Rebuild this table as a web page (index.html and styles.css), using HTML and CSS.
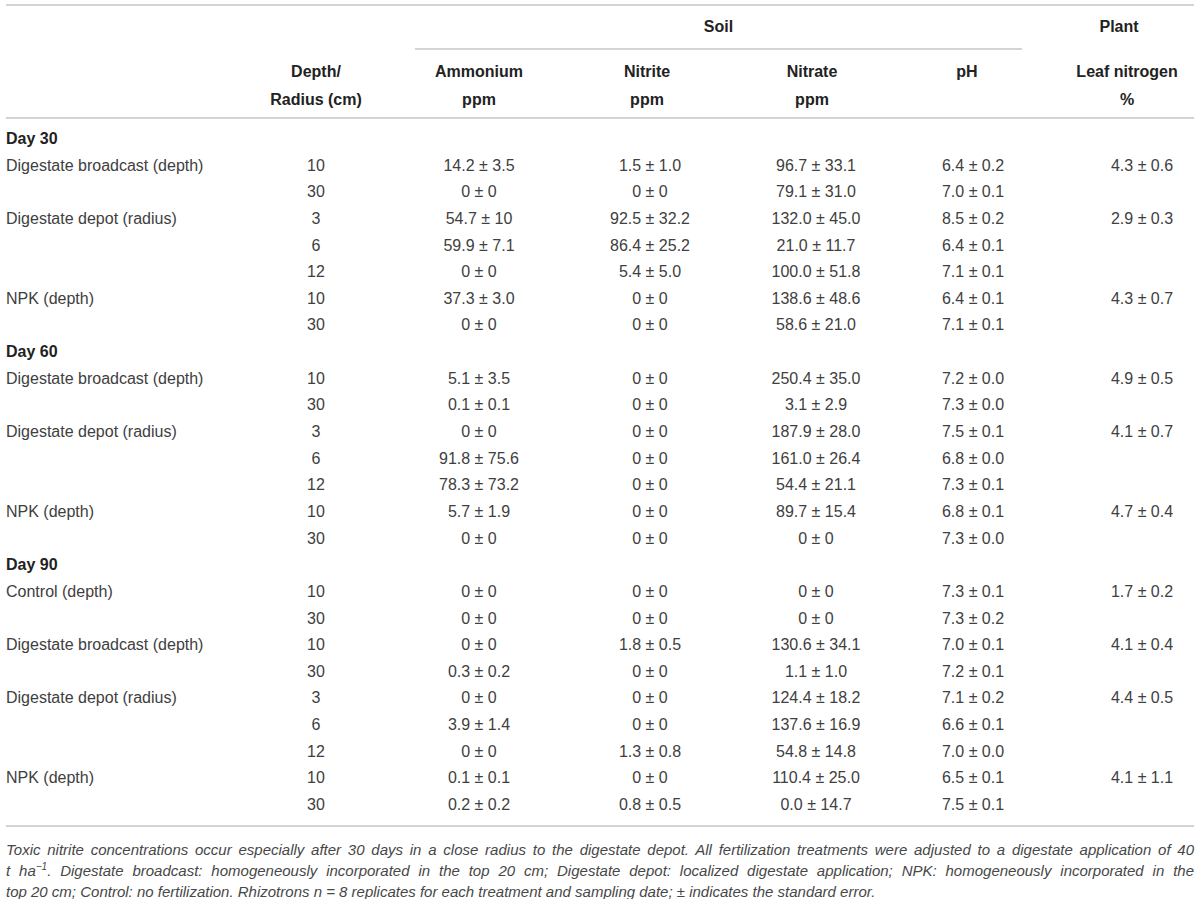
FILE: index.html
```html
<!DOCTYPE html>
<html lang="en">
<head>
  <meta charset="UTF-8">
  <meta name="viewport" content="width=device-width, initial-scale=1.0">
  <title>Soil and plant nitrogen</title>
  <link rel="stylesheet" href="styles.css">
</head>
<body>
<div class="page">
  <table class="data-table">
    <colgroup>
      <col class="col-label">
      <col class="col-depth">
      <col class="col-ammonium">
      <col class="col-nitrite">
      <col class="col-nitrate">
      <col class="col-ph">
      <col class="col-leaf">
    </colgroup>
    <thead>
      <tr class="group-row">
        <th rowspan="2" class="head-label"></th>
        <th rowspan="2" class="head-depth">Depth/<br>Radius (cm)</th>
        <th colspan="4" class="group"><div class="group-title">Soil</div></th>
        <th class="group plant">Plant</th>
      </tr>
      <tr class="unit-row">
        <th>Ammonium<br>ppm</th>
        <th>Nitrite<br>ppm</th>
        <th>Nitrate<br>ppm</th>
        <th class="ph">pH<br>&nbsp;</th>
        <th class="leaf">Leaf nitrogen<br>%</th>
      </tr>
    </thead>
    <tbody>
      <tr class="day first"><td colspan="7">Day 30</td></tr>
      <tr><td>Digestate broadcast (depth)</td><td>10</td><td>14.2 ± 3.5</td><td class="nitrite">1.5 ± 1.0</td><td class="nitrate">96.7 ± 33.1</td><td class="ph">6.4 ± 0.2</td><td class="leaf">4.3 ± 0.6</td></tr>
      <tr><td></td><td>30</td><td>0 ± 0</td><td class="nitrite">0 ± 0</td><td class="nitrate">79.1 ± 31.0</td><td class="ph">7.0 ± 0.1</td><td class="leaf"></td></tr>
      <tr><td>Digestate depot (radius)</td><td>3</td><td>54.7 ± 10</td><td class="nitrite">92.5 ± 32.2</td><td class="nitrate">132.0 ± 45.0</td><td class="ph">8.5 ± 0.2</td><td class="leaf">2.9 ± 0.3</td></tr>
      <tr><td></td><td>6</td><td>59.9 ± 7.1</td><td class="nitrite">86.4 ± 25.2</td><td class="nitrate">21.0 ± 11.7</td><td class="ph">6.4 ± 0.1</td><td class="leaf"></td></tr>
      <tr><td></td><td>12</td><td>0 ± 0</td><td class="nitrite">5.4 ± 5.0</td><td class="nitrate">100.0 ± 51.8</td><td class="ph">7.1 ± 0.1</td><td class="leaf"></td></tr>
      <tr><td>NPK (depth)</td><td>10</td><td>37.3 ± 3.0</td><td class="nitrite">0 ± 0</td><td class="nitrate">138.6 ± 48.6</td><td class="ph">6.4 ± 0.1</td><td class="leaf">4.3 ± 0.7</td></tr>
      <tr><td></td><td>30</td><td>0 ± 0</td><td class="nitrite">0 ± 0</td><td class="nitrate">58.6 ± 21.0</td><td class="ph">7.1 ± 0.1</td><td class="leaf"></td></tr>

      <tr class="day"><td colspan="7">Day 60</td></tr>
      <tr><td>Digestate broadcast (depth)</td><td>10</td><td>5.1 ± 3.5</td><td class="nitrite">0 ± 0</td><td class="nitrate">250.4 ± 35.0</td><td class="ph">7.2 ± 0.0</td><td class="leaf">4.9 ± 0.5</td></tr>
      <tr><td></td><td>30</td><td>0.1 ± 0.1</td><td class="nitrite">0 ± 0</td><td class="nitrate">3.1 ± 2.9</td><td class="ph">7.3 ± 0.0</td><td class="leaf"></td></tr>
      <tr><td>Digestate depot (radius)</td><td>3</td><td>0 ± 0</td><td class="nitrite">0 ± 0</td><td class="nitrate">187.9 ± 28.0</td><td class="ph">7.5 ± 0.1</td><td class="leaf">4.1 ± 0.7</td></tr>
      <tr><td></td><td>6</td><td>91.8 ± 75.6</td><td class="nitrite">0 ± 0</td><td class="nitrate">161.0 ± 26.4</td><td class="ph">6.8 ± 0.0</td><td class="leaf"></td></tr>
      <tr><td></td><td>12</td><td>78.3 ± 73.2</td><td class="nitrite">0 ± 0</td><td class="nitrate">54.4 ± 21.1</td><td class="ph">7.3 ± 0.1</td><td class="leaf"></td></tr>
      <tr><td>NPK (depth)</td><td>10</td><td>5.7 ± 1.9</td><td class="nitrite">0 ± 0</td><td class="nitrate">89.7 ± 15.4</td><td class="ph">6.8 ± 0.1</td><td class="leaf">4.7 ± 0.4</td></tr>
      <tr><td></td><td>30</td><td>0 ± 0</td><td class="nitrite">0 ± 0</td><td class="nitrate">0 ± 0</td><td class="ph">7.3 ± 0.0</td><td class="leaf"></td></tr>

      <tr class="day"><td colspan="7">Day 90</td></tr>
      <tr><td>Control (depth)</td><td>10</td><td>0 ± 0</td><td class="nitrite">0 ± 0</td><td class="nitrate">0 ± 0</td><td class="ph">7.3 ± 0.1</td><td class="leaf">1.7 ± 0.2</td></tr>
      <tr><td></td><td>30</td><td>0 ± 0</td><td class="nitrite">0 ± 0</td><td class="nitrate">0 ± 0</td><td class="ph">7.3 ± 0.2</td><td class="leaf"></td></tr>
      <tr><td>Digestate broadcast (depth)</td><td>10</td><td>0 ± 0</td><td class="nitrite">1.8 ± 0.5</td><td class="nitrate">130.6 ± 34.1</td><td class="ph">7.0 ± 0.1</td><td class="leaf">4.1 ± 0.4</td></tr>
      <tr><td></td><td>30</td><td>0.3 ± 0.2</td><td class="nitrite">0 ± 0</td><td class="nitrate">1.1 ± 1.0</td><td class="ph">7.2 ± 0.1</td><td class="leaf"></td></tr>
      <tr><td>Digestate depot (radius)</td><td>3</td><td>0 ± 0</td><td class="nitrite">0 ± 0</td><td class="nitrate">124.4 ± 18.2</td><td class="ph">7.1 ± 0.2</td><td class="leaf">4.4 ± 0.5</td></tr>
      <tr><td></td><td>6</td><td>3.9 ± 1.4</td><td class="nitrite">0 ± 0</td><td class="nitrate">137.6 ± 16.9</td><td class="ph">6.6 ± 0.1</td><td class="leaf"></td></tr>
      <tr><td></td><td>12</td><td>0 ± 0</td><td class="nitrite">1.3 ± 0.8</td><td class="nitrate">54.8 ± 14.8</td><td class="ph">7.0 ± 0.0</td><td class="leaf"></td></tr>
      <tr><td>NPK (depth)</td><td>10</td><td>0.1 ± 0.1</td><td class="nitrite">0 ± 0</td><td class="nitrate">110.4 ± 25.0</td><td class="ph">6.5 ± 0.1</td><td class="leaf">4.1 ± 1.1</td></tr>
      <tr class="last"><td></td><td>30</td><td>0.2 ± 0.2</td><td class="nitrite">0.8 ± 0.5</td><td class="nitrate">0.0 ± 14.7</td><td class="ph">7.5 ± 0.1</td><td class="leaf"></td></tr>
    </tbody>
  </table>

  <p class="table-note">
    <span class="note-line">Toxic nitrite concentrations occur especially after 30 days in a close radius to the digestate depot. All fertilization treatments were adjusted to a digestate application of 40</span>
    <span class="note-line">t ha<sup>−1</sup>. Digestate broadcast: homogeneously incorporated in the top 20 cm; Digestate depot: localized digestate application; NPK: homogeneously incorporated in the</span>
    <span class="note-line end">top 20 cm; Control: no fertilization. Rhizotrons n = 8 replicates for each treatment and sampling date; ± indicates the standard error.</span>
  </p>
</div>
</body>
</html>
```

FILE: styles.css
```css
/* Base */
* {
  margin: 0;
  padding: 0;
  box-sizing: border-box;
}

body {
  font-family: "Liberation Sans", Arial, Helvetica, sans-serif;
  background: #ffffff;
  color: #404040;
}

.page {
  width: 1200px;
  padding: 4px 6px 0 6px;
}

/* Table */
.data-table {
  width: 1188px;
  table-layout: fixed;
  border-collapse: separate;
  border-spacing: 0;
  border-top: 2px solid #d4d4d4;
  border-bottom: 2px solid #d4d4d4;
}

.col-label { width: 234px; }
.col-depth { width: 152px; }
.col-ammonium { width: 174px; }
.col-nitrite { width: 162px; }
.col-nitrate { width: 168px; }
.col-ph { width: 148px; }
.col-leaf { width: 150px; }

/* Header */
.data-table th {
  font-size: 16px;
  font-weight: bold;
  color: #222;
  text-align: center;
  padding: 0;
}

.group-row th.group {
  vertical-align: top;
  line-height: 42px;
}

.group-title {
  margin: 0 22px 0 23px;
  border-bottom: 2px solid #d4d4d4;
}

.head-label,
.head-depth {
  vertical-align: bottom;
  line-height: 28px;
  padding-bottom: 3px !important;
  border-bottom: 2px solid #d4d4d4;
}

.unit-row th {
  line-height: 28px;
  padding: 8px 0 3px;
  border-bottom: 2px solid #d4d4d4;
}

.unit-row th.ph { padding-right: 6px; }
.unit-row th.leaf { padding-left: 16px; }

/* Body rows */
.data-table td {
  font-size: 16px;
  line-height: 26.64px;
  text-align: center;
  white-space: nowrap;
  padding: 0;
}

.data-table td:first-child {
  text-align: left;
}

.data-table td.nitrite { padding-left: 6px; }
.data-table td.nitrate { padding-left: 8px; }
.data-table td.ph { padding-left: 6px; }
.data-table td.leaf { padding-left: 46px; }

.day td {
  font-weight: bold;
  color: #222;
}

.first td {
  padding-top: 7px;
}

.last td {
  padding-bottom: 6px;
}

/* Footnote */
.table-note {
  margin-top: 12px;
  font-size: 15px;
  font-style: italic;
  line-height: 21px;
  color: #474747;
}

.note-line {
  display: block;
  white-space: nowrap;
  text-align: justify;
  text-align-last: justify;
}

.note-line.end {
  text-align-last: left;
}

.table-note sup {
  font-size: 10px;
  line-height: 0;
  vertical-align: 6px;
}
```
